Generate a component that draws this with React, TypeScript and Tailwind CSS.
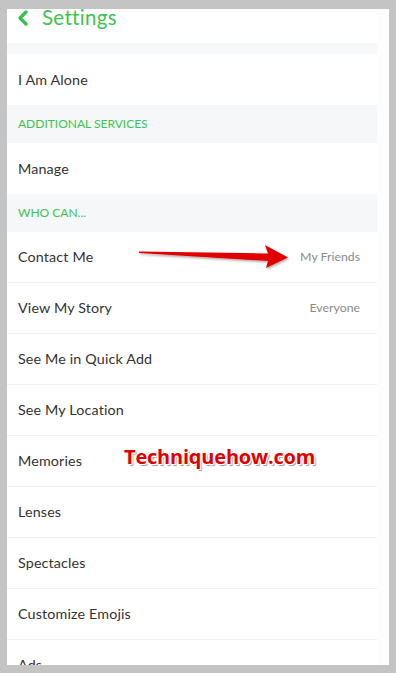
import React from "react";

const font = { fontFamily: "Lato, 'Noto Sans', sans-serif" };

function Row({ label, value, last }: { label: string; value?: string; last?: boolean }) {
  return (
    <div className={`h-[51px] shrink-0 flex items-center justify-between pl-[11px] pr-[17px] bg-white ${last ? "" : "border-b border-[#f1f1f1]"}`}>
      <span className="text-[14.3px] text-[#333333] tracking-[0.15px]">{label}</span>
      {value && <span className="text-[12.3px] text-[#8a8a8a]">{value}</span>}
    </div>
  );
}

function Section({ label }: { label: string }) {
  return (
    <div className="h-[38px] shrink-0 flex items-center pl-[11px] bg-[#f5f7f8]">
      <span className="text-[12px] text-[#3cc452] uppercase">{label}</span>
    </div>
  );
}

export default function App() {
  return (
    <div className="relative w-[396px] h-[673px] bg-[#c4c4c4] pt-[9px] pl-[7px] pr-[7px] pb-[8px] flex overflow-hidden" style={font}>
      <div className="flex-1 bg-white flex overflow-hidden">
        <div className="w-[370px] flex flex-col overflow-hidden">
          <div className="h-[34px] shrink-0 flex items-start pl-[9px] gap-[12px]">
            <svg width="14" height="16" viewBox="0 0 14 16" className="mt-[1px]">
              <path d="M10 2 L4 8 L10 14" fill="none" stroke="#35c04d" strokeWidth="3.2" strokeLinecap="round" strokeLinejoin="round" />
            </svg>
            <span className="text-[20.5px] leading-[18px] text-[#3cc452] -mt-[1px] tracking-[0.3px]">Settings</span>
          </div>
          <div className="h-[11px] shrink-0 bg-[#f5f7f8]" />
          <Row label="I Am Alone" last />
          <Section label="Additional Services" />
          <Row label="Manage" last />
          <Section label="Who Can..." />
          <Row label="Contact Me" value="My Friends" />
          <Row label="View My Story" value="Everyone" />
          <Row label="See Me in Quick Add" />
          <Row label="See My Location" />
          <Row label="Memories" />
          <Row label="Lenses" />
          <Row label="Spectacles" />
          <Row label="Customize Emojis" />
          <Row label="Ads" />
        </div>
        <div className="flex-1 bg-[#fdfdfd]" />
      </div>

      <svg className="absolute left-0 top-0" width="396" height="673" viewBox="0 0 396 673">
        <defs>
          <filter id="sh" x="-10%" y="-30%" width="130%" height="180%">
            <feDropShadow dx="1" dy="1.5" stdDeviation="0.8" floodColor="#000" floodOpacity="0.35" />
          </filter>
        </defs>
        <g filter="url(#sh)">
          <path d="M139 251.5 L268 253.5 L265 245 L288 257.5 L266 268 L268 261 L139 253 Z" fill="#e10000" />
        </g>
      </svg>

      <div
        className="absolute left-[124px] top-[444px] text-[20px] font-bold text-[#e00000] leading-[26px] tracking-[-0.2px]"
        style={{
          fontFamily: "'Open Sans', 'Noto Sans', sans-serif",
          textShadow:
            "1px 0 0 #fff, -1px 0 0 #fff, 0 1px 0 #fff, 0 -1px 0 #fff, 1px 1px 0 #fff, -1px -1px 0 #fff, 1px -1px 0 #fff, -1px 1px 0 #fff, 2px 2px 1px #999",
        }}
      >
        Techniquehow.com
      </div>
    </div>
  );
}
